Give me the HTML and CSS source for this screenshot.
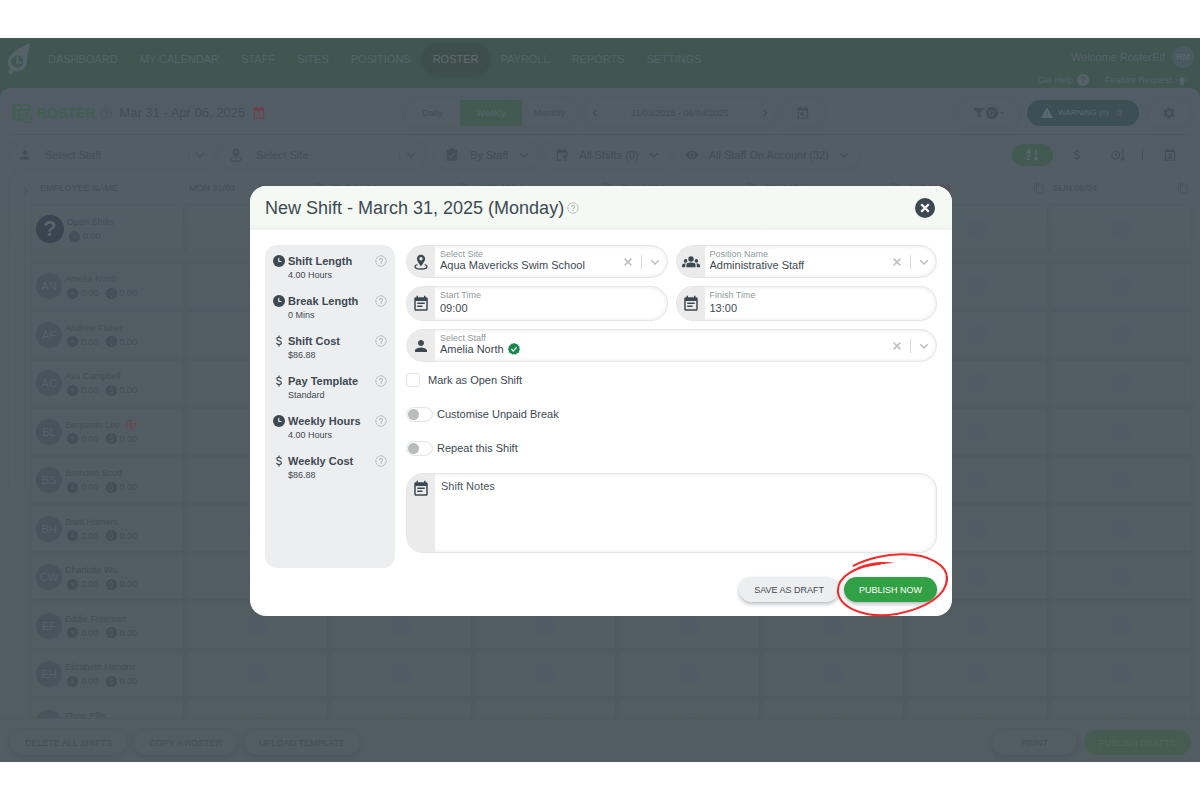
FILE: index.html
```html
<!DOCTYPE html>
<html lang="en">
<head>
  <meta charset="UTF-8">
  <meta name="viewport" content="width=device-width, initial-scale=1.0">
  <title>Roster - New Shift</title>
  <link rel="stylesheet" href="styles.css">
</head>
<body>
  <!-- Icon sprite -->
  <svg class="sprite" aria-hidden="true">
    <symbol id="i-person" viewBox="0 0 24 24"><path d="M12 12c2.21 0 4-1.79 4-4s-1.79-4-4-4-4 1.79-4 4 1.79 4 4 4zm0 2c-2.67 0-8 1.34-8 4v2h16v-2c0-2.66-5.33-4-8-4z"/></symbol>
    <symbol id="i-pin" viewBox="0 0 24 24"><path fill-rule="evenodd" d="M12 1C8.4 1 5.8 3.7 5.8 7.2c0 4.200 6.200 11.300 6.200 11.300s6.200-7.100 6.200-11.300C18.200 3.700 15.600 1 12 1zm0 8.600a2.500 2.500 0 1 1 0-5 2.500 2.500 0 0 1 0 5z"/><path d="M6.500 16C4.300 16.600 3 17.500 3 18.700 3 21 7 22.500 12 22.500s9-1.500 9-3.800c0-1.200-1.300-2.100-3.500-2.700" fill="none" stroke="currentColor" stroke-width="2"/></symbol>
    <symbol id="i-note" viewBox="0 0 24 24"><path d="M17 10H7v2h10v-2zm2-7h-1V1h-2v2H8V1H6v2H5c-1.110 0-1.990.9-1.990 2L3 19c0 1.100.89 2 2 2h14c1.100 0 2-.9 2-2V5c0-1.100-.9-2-2-2zm0 16H5V8h14v11zm-5-5H7v2h7v-2z"/></symbol>
    <symbol id="i-groups" viewBox="0 0 24 24"><path d="M12 12.500c1.800 0 3.400.4 4.500.9 1 .5 1.600 1.500 1.600 2.700V19H5.900v-2.900c0-1.200.6-2.200 1.600-2.700 1.100-.5 2.700-.9 4.500-.9z"/><circle cx="12" cy="8" r="3.600"/><circle cx="4.800" cy="10.500" r="2.400"/><circle cx="19.200" cy="10.500" r="2.400"/><path d="M5 14c-2.500 0-5 .8-5 2.600V19h4.300v-3c0-.8.200-1.400.700-2zM19 14c2.500 0 5 .8 5 2.600V19h-4.300v-3c0-.8-.2-1.400-.7-2z"/></symbol>
    <symbol id="i-help" viewBox="0 0 24 24"><circle cx="12" cy="12" r="10.500" fill="none" stroke="currentColor" stroke-width="1.600"/><path d="M11 18h2v-2h-2v2zM12 6c-2.210 0-4 1.790-4 4h2c0-1.100.9-2 2-2s2 .9 2 2c0 2-3 1.750-3 5h2c0-2.250 3-2.500 3-5 0-2.210-1.790-4-4-4z"/></symbol>
    <symbol id="i-help-fill" viewBox="0 0 24 24"><circle cx="12" cy="12" r="12"/><path class="knock" d="M10.700 19h2.600v-2.600h-2.600V19zM12 4.500c-2.600 0-4.600 2-4.600 4.600H10c0-1.100.9-2 2-2s2 .9 2 2c0 2-3.300 2.200-3.300 5.700h2.600c0-2.400 3.300-2.700 3.300-5.700 0-2.600-2-4.600-4.600-4.600z"/></symbol>
    <symbol id="i-copy" viewBox="0 0 24 24"><path d="M16 1H4c-1.100 0-2 .9-2 2v14h2V3h12V1zm3 4H8c-1.100 0-2 .9-2 2v14c0 1.100.9 2 2 2h11c1.100 0 2-.9 2-2V7c0-1.100-.9-2-2-2zm0 16H8V7h11v14z"/></symbol>
    <symbol id="i-dollar" viewBox="0 0 24 24"><path d="M16.500 7.500C16 5.600 14.300 4.800 12 4.800c-2.700 0-4.400 1.300-4.400 3.300 0 2.300 2 3 4.400 3.600 2.700.7 4.700 1.500 4.700 3.900 0 2.200-1.900 3.600-4.700 3.600-2.600 0-4.500-1.100-4.900-3.300M12 1v4M12 19v4" fill="none" stroke="currentColor" stroke-width="2.400"/></symbol>
    <symbol id="i-clock" viewBox="0 0 24 24"><circle cx="12" cy="12" r="12"/><path class="knock-line" d="M11.500 6v7H17" fill="none" stroke-width="2.200"/></symbol>
    <symbol id="i-coin" viewBox="0 0 24 24"><circle cx="12" cy="12" r="12"/><path class="knock-line" d="M16 8.500c-.6-1.700-2-2.300-4-2.300-2.300 0-3.700 1-3.700 2.600 0 2 1.700 2.500 3.700 3 2.200.6 4 1.200 4 3.200 0 1.700-1.600 2.900-4 2.900-2.200 0-3.800-.9-4.100-2.700M12 3.500V6M12 18v3" fill="none" stroke-width="2"/></symbol>
    <symbol id="i-chevron" viewBox="0 0 24 24"><path d="M3 8l9 9 9-9" fill="none" stroke="currentColor" stroke-width="3.400"/></symbol>
    <symbol id="i-next" viewBox="0 0 24 24"><path d="M8 4l8 8-8 8" fill="none" stroke="currentColor" stroke-width="3"/></symbol>
    <symbol id="i-prev" viewBox="0 0 24 24"><path d="M16 4l-8 8 8 8" fill="none" stroke="currentColor" stroke-width="3"/></symbol>
    <symbol id="i-x" viewBox="0 0 24 24"><path d="M4 4l16 16M20 4L4 20" fill="none" stroke="currentColor" stroke-width="4"/></symbol>
    <symbol id="i-close" viewBox="0 0 24 24"><circle cx="12" cy="12" r="12"/><path d="M7.500 7.500l9 9M16.500 7.500l-9 9" fill="none" stroke="#fff" stroke-width="2.600"/></symbol>
    <symbol id="i-verified" viewBox="0 0 24 24"><path d="M12 0l3 1.600 3.500.2 1.500 3.100 2.900 2L22.700 10.500 24 13l-1.800 3-.6 3.400-3.400.9L15.600 23 12 22.700 8.500 23.200 5.800 20.500l-3.400-.9L1.900 16 0 12.800l1.300-3.200L1.600 6l3.100-1.600L6.300 1.500 9.600 1.700z"/><path d="M6.800 12.300l3.600 3.600 7-7.200" fill="none" stroke="#fff" stroke-width="2.600"/></symbol>
    <symbol id="i-cal-alert" viewBox="0 0 24 24"><path fill-rule="evenodd" d="M19 3h-1V1h-2v2H8V1H6v2H5a2 2 0 0 0-2 2v15a2 2 0 0 0 2 2h14a2 2 0 0 0 2-2V5a2 2 0 0 0-2-2zm0 17H5V8h14v12zM11 9.500h2v5h-2zM11 16h2v2h-2z"/></symbol>
    <symbol id="i-cal" viewBox="0 0 24 24"><path d="M19 3h-1V1h-2v2H8V1H6v2H5a2 2 0 0 0-2 2v15a2 2 0 0 0 2 2h14a2 2 0 0 0 2-2V5a2 2 0 0 0-2-2zm0 17H5V8h14v12zM8 11h5v5H8z"/></symbol>
    <symbol id="i-cal-person" viewBox="0 0 24 24"><path d="M19 3h-1V1h-2v2H8V1H6v2H5a2 2 0 0 0-2 2v15a2 2 0 0 0 2 2h14a2 2 0 0 0 2-2V5a2 2 0 0 0-2-2zm0 17H5V7h14v13z"/><circle cx="12" cy="11.500" r="2.300"/><path d="M7.500 18v-1c0-1.500 3-2.300 4.500-2.300s4.500.8 4.500 2.300v1z"/></symbol>
    <symbol id="i-cal-filter" viewBox="0 0 24 24"><path d="M19 3h-1V1h-2v2H8V1H6v2H5a2 2 0 0 0-2 2v15a2 2 0 0 0 2 2h7v-2H5V8h14v3h2V5a2 2 0 0 0-2-2z"/><path d="M12.500 13H23l-4 4.500V23l-2.500-1.500v-4z"/></symbol>
    <symbol id="i-task" viewBox="0 0 24 24"><path d="M19 3h-4a3 3 0 0 0-6 0H5a2 2 0 0 0-2 2v15a2 2 0 0 0 2 2h14a2 2 0 0 0 2-2V5a2 2 0 0 0-2-2z"/><path class="knock-line" d="M7 12.500l3.500 3.500L17 9.500" fill="none" stroke-width="2.200"/></symbol>
    <symbol id="i-eye" viewBox="0 0 24 24"><path d="M12 4.500C7 4.500 2.730 7.610 1 12c1.730 4.390 6 7.500 11 7.500s9.270-3.110 11-7.500c-1.730-4.390-6-7.500-11-7.500zM12 17c-2.760 0-5-2.240-5-5s2.240-5 5-5 5 2.240 5 5-2.240 5-5 5zm0-8c-1.660 0-3 1.340-3 3s1.340 3 3 3 3-1.340 3-3-1.340-3-3-3z"/></symbol>
    <symbol id="i-filter" viewBox="0 0 24 24"><path d="M1 2h22l-8 10v10l-6-4v-6z"/></symbol>
    <symbol id="i-warning" viewBox="0 0 24 24"><path d="M0 22h24L12 1 0 22zm13-3h-2v-2h2v2zm0-4h-2V9h2v6z"/></symbol>
    <symbol id="i-gear" viewBox="0 0 24 24"><path d="M19.140 12.940c.04-.3.06-.61.06-.94 0-.32-.02-.64-.07-.94l2.030-1.580c.18-.14.23-.41.12-.61l-1.920-3.320c-.12-.22-.37-.29-.59-.22l-2.390.96c-.5-.38-1.030-.7-1.620-.94l-.36-2.540c-.04-.24-.24-.41-.48-.41h-3.840c-.24 0-.43.17-.47.41l-.36 2.540c-.59.24-1.130.57-1.620.94l-2.390-.96c-.22-.08-.47 0-.59.22L2.740 8.870c-.12.21-.08.47.12.61l2.030 1.580c-.05.3-.09.63-.09.94s.02.64.07.94l-2.030 1.580c-.18.14-.23.41-.12.61l1.920 3.320c.12.22.37.29.59.22l2.390-.96c.5.38 1.030.7 1.620.94l.36 2.540c.05.24.24.41.48.41h3.840c.24 0 .44-.17.47-.41l.36-2.540c.59-.24 1.130-.56 1.620-.94l2.390.96c.22.08.47 0 .59-.22l1.920-3.320c.12-.22.07-.47-.12-.61l-2.010-1.580zM12 15.600c-1.980 0-3.600-1.620-3.600-3.600s1.620-3.600 3.600-3.600 3.600 1.620 3.600 3.600-1.620 3.600-3.600 3.600z"/></symbol>
    <symbol id="i-sort-time" viewBox="0 0 24 24"><circle cx="8" cy="12" r="6.500" fill="none" stroke="currentColor" stroke-width="2"/><path d="M8 8v4l2.500 2M20 2v18M16.500 17l3.500 4 3.500-4" fill="none" stroke="currentColor" stroke-width="2"/></symbol>
    <symbol id="i-down" viewBox="0 0 12 24"><path d="M6 1v20M2 17l4 5 4-5" fill="none" stroke="currentColor" stroke-width="2.400"/></symbol>
    <symbol id="i-bulb" viewBox="0 0 24 24"><path d="M12 6a6 6 0 0 0-3 11v5h6v-5a6 6 0 0 0-3-11z"/><path d="M12 0v3M3 4l2 2M21 4l-2 2M0 12h3M21 12h3" stroke="currentColor" stroke-width="2"/></symbol>
    <symbol id="i-pay" viewBox="0 0 24 24"><path d="M4 16A9 9 0 0 1 14 3M20 8a9 9 0 0 1-10 13M1 10l3 6 4-4M23 14l-3-6-4 4" fill="none" stroke="currentColor" stroke-width="2"/><path d="M15 9c-3-3-7 0-4.500 2.500C12 12.500 15 12.500 14.500 15c-1 2-4 2-5.500 0M12 6v12" fill="none" stroke="currentColor" stroke-width="1.800"/></symbol>
    <symbol id="i-add" viewBox="0 0 24 24"><circle cx="12" cy="12" r="11"/><path class="knock-line" d="M12 6v12M6 12h12" stroke-width="1.600"/></symbol>
  </svg>

  <div class="app">
    <header class="topbar">
      <svg class="logo" viewBox="22 22 68 94" aria-label="RosterElf"><path fill-rule="evenodd" d="M88 22C60 34 24 52 24 80c0 8 3 14 7 18l-8 10 10 7 7-11c22 6 40-8 40-30 0-20 6-34 8-52zM51 59a18 18 0 1 0 0 36 18 18 0 0 0 0-36z"/><path d="M51 62v18h14" fill="none" stroke="currentColor" stroke-width="6"/></svg>
      <nav class="nav">
        <a href="#">DASHBOARD</a>
        <a href="#">MY CALENDAR</a>
        <a href="#">STAFF</a>
        <a href="#">SITES</a>
        <a href="#">POSITIONS</a>
        <a href="#" class="active">ROSTER</a>
        <a href="#">PAYROLL</a>
        <a href="#">REPORTS</a>
        <a href="#">SETTINGS</a>
      </nav>
      <div class="account">
        <div class="welcome">Welcome RosterElf <span class="user">RM</span></div>
        <div class="help-links">
          <a href="#">Get Help <svg class="icon s12"><use href="#i-help-fill"/></svg></a>
          <a href="#">Feature Request <svg class="icon s12"><use href="#i-bulb"/></svg></a>
        </div>
      </div>
    </header>

    <main class="content">
      <div class="title-row">
        <div class="title-left">
          <svg class="roster-icon" viewBox="0 0 24 24"><path d="M11 20H2V2h19v8M2 8h19M2 14h9M11 2v6M8 8v12" fill="none" stroke="currentColor" stroke-width="2.400"/><circle cx="17.500" cy="17.500" r="5.500" fill="none" stroke="currentColor" stroke-width="2"/><path d="M17 14.500V18h3" fill="none" stroke="currentColor" stroke-width="1.600"/></svg>
          <h1>ROSTER</h1>
          <svg class="icon s12 faint"><use href="#i-help"/></svg>
          <span class="period">Mar 31 - Apr 06, 2025</span>
          <svg class="icon s14 red"><use href="#i-cal-alert"/></svg>
        </div>
        <div class="pill views">
          <button>Daily</button>
          <button class="selected">Weekly</button>
          <button>Monthly</button>
        </div>
        <div class="pill range">
          <button aria-label="Previous week"><svg class="icon s10"><use href="#i-prev"/></svg></button>
          <span>31/03/2025 - 06/04/2025</span>
          <button aria-label="Next week"><svg class="icon s10"><use href="#i-next"/></svg></button>
        </div>
        <button class="pill square" aria-label="Today"><svg class="icon s14"><use href="#i-cal"/></svg></button>
        <div class="actions">
          <button class="pill filter" aria-label="Filter"><svg class="icon s12"><use href="#i-filter"/></svg><span class="count">0</span><span class="caret"></span></button>
          <button class="warning"><svg class="icon s12"><use href="#i-warning"/></svg>WARNING (0)<span class="dot">0</span></button>
          <button class="pill square" aria-label="Settings"><svg class="icon s14"><use href="#i-gear"/></svg></button>
        </div>
      </div>

      <div class="filters">
        <button class="pill combo wide"><svg class="icon s14"><use href="#i-person"/></svg><span>Select Staff</span><svg class="icon s10 split"><use href="#i-chevron"/></svg></button>
        <button class="pill combo wide"><svg class="icon s14"><use href="#i-pin"/></svg><span>Select Site</span><svg class="icon s10 split"><use href="#i-chevron"/></svg></button>
        <button class="pill combo first"><svg class="icon s14"><use href="#i-task"/></svg><span>By Staff</span><svg class="icon s10"><use href="#i-chevron"/></svg></button>
        <button class="pill combo"><svg class="icon s14"><use href="#i-cal-filter"/></svg><span>All Shifts (0)</span><svg class="icon s10"><use href="#i-chevron"/></svg></button>
        <button class="pill combo"><svg class="icon s14"><use href="#i-eye"/></svg><span>All Staff On Account (32)</span><svg class="icon s10"><use href="#i-chevron"/></svg></button>
        <div class="sorting">
          <button class="sort on" aria-label="Sort by name"><span class="az">A<br>Z</span><svg class="icon down"><use href="#i-down"/></svg></button>
          <button class="sort" aria-label="Sort by cost"><svg class="icon s12"><use href="#i-dollar"/></svg></button>
          <button class="sort" aria-label="Sort by hours"><svg class="icon s14"><use href="#i-sort-time"/></svg></button>
          <span class="bar"></span>
          <button class="sort leave" aria-label="Leave calendar"><svg class="icon s14"><use href="#i-cal-person"/></svg></button>
        </div>
      </div>

      <div class="roster">
        <div class="strip"><button class="expand" aria-label="Expand"><svg class="icon s10"><use href="#i-next"/></svg></button></div>
        <div class="table-wrap">
          <table>
            <thead><tr id="days"><th class="employee">EMPLOYEE NAME</th></tr></thead>
            <tbody id="open"></tbody>
            <tbody><tr class="spacer"><td colspan="8"></td></tr></tbody>
            <tbody id="staff"></tbody>
          </table>
        </div>
      </div>

      <footer class="bottombar">
        <button class="foot">DELETE ALL SHIFTS</button>
        <button class="foot">COPY A ROSTER</button>
        <button class="foot">UPLOAD TEMPLATE</button>
        <button class="foot print">PRINT</button>
        <button class="foot publish-drafts">PUBLISH DRAFTS</button>
      </footer>
    </main>

    <div class="overlay">
      <form class="modal" role="dialog" aria-labelledby="modal-title">
        <div class="modal-header">
          <h2 id="modal-title">New Shift - March 31, 2025 (Monday)</h2>
          <svg class="icon s12 hint"><use href="#i-help"/></svg>
          <button type="button" class="close" aria-label="Close"><svg class="icon s20"><use href="#i-close"/></svg></button>
        </div>

        <div class="modal-body">
          <aside class="summary">
            <div class="stat"><svg class="icon s12"><use href="#i-clock"/></svg><strong>Shift Length</strong><svg class="icon s12 hint"><use href="#i-help"/></svg><span>4.00 Hours</span></div>
            <div class="stat"><svg class="icon s12"><use href="#i-clock"/></svg><strong>Break Length</strong><svg class="icon s12 hint"><use href="#i-help"/></svg><span>0 Mins</span></div>
            <div class="stat"><svg class="icon s12"><use href="#i-dollar"/></svg><strong>Shift Cost</strong><svg class="icon s12 hint"><use href="#i-help"/></svg><span>$86.88</span></div>
            <div class="stat"><svg class="icon s12"><use href="#i-dollar"/></svg><strong>Pay Template</strong><svg class="icon s12 hint"><use href="#i-help"/></svg><span>Standard</span></div>
            <div class="stat"><svg class="icon s12"><use href="#i-clock"/></svg><strong>Weekly Hours</strong><svg class="icon s12 hint"><use href="#i-help"/></svg><span>4.00 Hours</span></div>
            <div class="stat"><svg class="icon s12"><use href="#i-dollar"/></svg><strong>Weekly Cost</strong><svg class="icon s12 hint"><use href="#i-help"/></svg><span>$86.88</span></div>
          </aside>

          <div class="fields">
            <div class="field">
              <span class="field-icon"><svg class="icon s16"><use href="#i-pin"/></svg></span>
              <div class="control">
                <label for="site">Select Site</label>
                <select id="site"><option>Aqua Mavericks Swim School</option></select>
              </div>
              <button type="button" class="clear" aria-label="Clear site"><svg class="icon s10"><use href="#i-x"/></svg></button>
              <svg class="icon arrow"><use href="#i-chevron"/></svg>
            </div>
            <div class="field">
              <span class="field-icon"><svg class="icon s18"><use href="#i-groups"/></svg></span>
              <div class="control">
                <label for="position">Position Name</label>
                <select id="position"><option>Administrative Staff</option></select>
              </div>
              <button type="button" class="clear" aria-label="Clear position"><svg class="icon s10"><use href="#i-x"/></svg></button>
              <svg class="icon arrow"><use href="#i-chevron"/></svg>
            </div>
            <div class="field time">
              <span class="field-icon"><svg class="icon s18"><use href="#i-note"/></svg></span>
              <div class="control">
                <label for="start">Start Time</label>
                <input id="start" type="text" value="09:00">
              </div>
            </div>
            <div class="field time">
              <span class="field-icon"><svg class="icon s18"><use href="#i-note"/></svg></span>
              <div class="control">
                <label for="finish">Finish Time</label>
                <input id="finish" type="text" value="13:00">
              </div>
            </div>
            <div class="field full">
              <span class="field-icon"><svg class="icon s18"><use href="#i-person"/></svg></span>
              <div class="control">
                <label for="member">Select Staff</label>
                <div class="with-badge">
                  <select id="member"><option>Amelia North</option></select>
                  <svg class="icon s12 verified"><use href="#i-verified"/></svg>
                </div>
              </div>
              <button type="button" class="clear" aria-label="Clear staff"><svg class="icon s10"><use href="#i-x"/></svg></button>
              <svg class="icon arrow"><use href="#i-chevron"/></svg>
            </div>

            <div class="options full">
              <label class="check"><input type="checkbox">Mark as Open Shift</label>
              <label class="switch"><input type="checkbox" role="switch">Customise Unpaid Break</label>
              <label class="switch"><input type="checkbox" role="switch">Repeat this Shift</label>
            </div>

            <div class="field notes full">
              <span class="field-icon"><svg class="icon s18"><use href="#i-note"/></svg></span>
              <textarea aria-label="Shift Notes" placeholder="Shift Notes"></textarea>
            </div>
          </div>
        </div>

        <div class="modal-footer">
          <button type="button" class="btn">SAVE AS DRAFT</button>
          <div class="marked">
            <button type="submit" class="btn primary">PUBLISH NOW</button>
            <svg class="scribble" viewBox="408 274 342 204"><path d="M461 318C500 297 560 283 610 284 690 284 742 318 741 357 740 405 680 446 590 463 510 477 425 452 414 400 408 350 470 318 540 312" fill="none" stroke="#f52a2a" stroke-width="6" stroke-linecap="round"/><path d="M470 325C500 309 545 304 584 309 550 312 500 318 470 330zM737 350C744 400 690 440 590 461 650 453 748 410 744 350z" fill="#f52a2a"/></svg>
          </div>
        </div>
      </form>
    </div>
  </div>

  <script src="script.js"></script>
</body>
</html>
```

FILE: styles.css
```css
* {
  box-sizing: border-box;
}

body {
  margin: 0;
  background: #fff;
  font-family: "Liberation Sans", Arial, sans-serif;
  font-size: 11px;
  color: #3d4952;
}

button,
input,
select,
textarea {
  font: inherit;
  color: inherit;
  margin: 0;
  padding: 0;
  border: 0;
  background: none;
}

button {
  display: flex;
  align-items: center;
  justify-content: center;
}

a {
  color: inherit;
  text-decoration: none;
}

/* Icons */
.sprite {
  position: absolute;
  width: 0;
  height: 0;
}

.icon {
  flex: none;
  fill: currentColor;
  --knock: #525d63;
}

.knock {
  fill: var(--knock);
}

.knock-line {
  stroke: var(--knock);
}

.s10 { width: 10px; height: 10px; }
.s12 { width: 12px; height: 12px; }
.s14 { width: 14px; height: 14px; }
.s16 { width: 16px; height: 16px; }
.s18 { width: 18px; height: 18px; }
.s20 { width: 20px; height: 20px; }

/* Dimmed page behind the dialog */
.app {
  position: relative;
  display: flex;
  flex-direction: column;
  height: calc(100vh - 76px);
  margin: 38px 0;
  background: #415650;
  color: #434e56;
  overflow: hidden;
}

.topbar {
  display: flex;
  height: 50px;
  padding: 0 6px 0 7px;
  color: #56626a;
}

.logo {
  width: 24px;
  height: 32px;
  margin-top: 5px;
  fill: currentColor;
}

.nav {
  display: flex;
  align-items: center;
  height: 33px;
  margin: 5px 0 0 6px;
}

.nav a {
  padding: 10px 11px;
  line-height: 13px;
}

.nav .active {
  border-radius: 17px;
  background: #3e4e4c;
  box-shadow: 0 1px 4px #3d504c;
  color: #626c76;
}

.account {
  margin-left: auto;
  padding-top: 8px;
}

.welcome,
.help-links,
.help-links a {
  display: flex;
  align-items: center;
  justify-content: flex-end;
}

.welcome {
  gap: 7px;
}

.user {
  display: grid;
  place-items: center;
  width: 22px;
  height: 22px;
  border-radius: 50%;
  background: #4b5960;
  font-size: 9px;
  color: #5f6a74;
}

.help-links {
  gap: 16px;
  height: 20px;
  padding-top: 4px;
  padding-right: 6px;
  font-size: 9px;
}

.help-links a {
  gap: 4px;
}

.help-links .icon {
  --knock: #415650;
}

.content {
  display: flex;
  flex: 1;
  flex-direction: column;
  min-height: 0;
  border-radius: 10px 10px 0 0;
  background: linear-gradient(#525c66, #525d63 160px, #515d61);
}

.title-row {
  display: flex;
  align-items: center;
  gap: 9px;
  height: 47px;
  margin: 0 10px;
  padding-top: 3px;
  border-bottom: 1px solid #4c575e;
  font-size: 9px;
}

.title-left {
  display: flex;
  flex: 0 0 386px;
  align-items: center;
  gap: 7px;
  padding-left: 2px;
}

.roster-icon {
  width: 20px;
  height: 20px;
  color: #435f52;
}

.title-left h1 {
  margin: 0 -2px;
  font-size: 14px;
  color: #435f52;
}

.period {
  font-size: 13px;
}

.faint {
  color: #49545b;
}

.red {
  color: #713f4a;
}

.pill {
  border-radius: 13px;
  height: 26px;
  box-shadow: 0 0 4px #4f5a64;
}

.views {
  display: flex;
  width: 172px;
}

.views button {
  flex: 1 1 0;
}

.views .selected {
  flex: 0 0 62px;
  background: #425a51;
  color: #56676c;
}

.range {
  display: flex;
  align-items: center;
  justify-content: space-between;
  width: 187px;
}

.range button {
  width: 17px;
  height: 26px;
}

.square {
  width: 42px;
}

.actions {
  display: flex;
  align-items: center;
  gap: 9px;
  margin-left: auto;
}

.filter {
  width: 60px;
  gap: 1px;
}

.count {
  width: 12px;
  border-radius: 6px;
  background: #414c53;
  color: #566168;
  font-size: 9px;
  line-height: 12px;
}

.caret {
  border: 2px solid transparent;
  border-top-color: currentColor;
  margin: 2px 0 0 1px;
}

.warning {
  gap: 5px;
  width: 112px;
  height: 26px;
  border-radius: 13px;
  background: #3c5054;
  color: #596a70;
  font-size: 8px;
}

.dot {
  width: 11px;
  border-radius: 6px;
  background: #424f56;
  line-height: 11px;
}

.filters {
  display: flex;
  align-items: center;
  gap: 8px;
  height: 35px;
  padding: 4px 10px 0;
}

.combo {
  gap: 10px;
  padding: 0 9px;
}

.combo.wide {
  width: 203px;
  gap: 13px;
  padding: 0 8px;
  color: #454f57;
}

.combo.wide span {
  flex: 1;
  text-align: left;
}

.combo.first {
  gap: 11px;
  margin-left: 4px;
}

.split {
  width: 17px;
  padding-left: 6px;
  border-left: 1px solid #4c575e;
  color: #48535b;
}

.sorting {
  display: flex;
  align-items: center;
  gap: 7px;
  margin-left: auto;
}

.sort {
  width: 34px;
  height: 22px;
  border-radius: 11px;
}

.sort.on {
  width: 41px;
  gap: 2px;
  background: #425a51;
  color: #5b6c70;
}

.sort.leave {
  width: 40px;
}

.az {
  font-size: 7px;
  font-weight: bold;
  line-height: 6px;
}

.down {
  width: 6px;
  height: 12px;
}

.bar {
  width: 1px;
  height: 11px;
  background: #434e56;
}

/* Roster table */
.roster {
  display: flex;
  flex: 1;
  min-height: 0;
  overflow: hidden;
  padding: 0 5px 0 8px;
}

.strip {
  position: relative;
  width: 17px;
  height: 320px;
  margin: 4px 3px 0 0;
  border: 1px solid #4f5a61;
  border-radius: 8px;
}

.expand {
  position: absolute;
  top: 8px;
  right: -10px;
  width: 16px;
  height: 16px;
}

.expand .icon {
  width: 8px;
  height: 8px;
}

.table-wrap {
  flex: 1;
}

.roster table {
  width: 100%;
  table-layout: fixed;
  border-collapse: separate;
  border-spacing: 4px;
  font-size: 9px;
}

.roster th {
  height: 28px;
  padding: 0 2px;
  font-weight: normal;
  text-align: left;
}

.roster th.employee {
  width: 151px;
  padding-left: 8px;
}

.roster .sat {
  color: #633f4a;
}

.day {
  display: flex;
  align-items: center;
  justify-content: space-between;
}

.roster td {
  height: 44px;
  padding: 0 4px;
  box-shadow: 0 0 2px 1px #4f5a60;
}

#open td {
  height: 46px;
}

#staff tr:nth-child(even) td {
  height: 45px;
}

.roster .spacer td {
  height: 4px;
  padding: 0;
  box-shadow: none;
}

.person {
  display: flex;
  align-items: center;
  gap: 3px;
}

.avatar {
  display: grid;
  flex: none;
  place-items: center;
  width: 26px;
  height: 26px;
  border-radius: 50%;
  background: #48545b;
  color: #566269;
  font-size: 11px;
}

.avatar.unknown {
  width: 28px;
  height: 28px;
  background: #394550;
  color: #5a656d;
  font-size: 22px;
  font-weight: bold;
}

.name,
.totals {
  display: flex;
  align-items: center;
  gap: 3px;
  height: 14px;
  white-space: nowrap;
}

.name {
  gap: 5px;
}

.totals {
  padding-left: 2px;
}

.totals .icon {
  width: 11px;
  height: 11px;
}

.totals .icon + span + .icon {
  margin-left: 4px;
}

.add {
  width: 22px;
  height: 22px;
  margin: auto;
  color: #505b65;
}

.add .icon {
  width: 22px;
  height: 22px;
}

.bottombar {
  display: flex;
  align-items: center;
  gap: 7px;
  height: 44px;
  padding: 4px 9px 0 10px;
  border-top: 1px solid #4e595f;
}

.foot {
  height: 25px;
  padding: 0 15px;
  border-radius: 13px;
  box-shadow: 0 1px 4px #4a555c;
  font-size: 9px;
}

.foot.print {
  margin-left: auto;
  padding: 0 29px;
}

.foot.publish-drafts {
  background: #465b52;
  box-shadow: none;
  color: #536460;
}

/* Dialog */
.overlay {
  position: absolute;
  inset: 0;
  display: flex;
  align-items: center;
  justify-content: center;
  padding: 2px 0 0 2px;
}

.modal {
  width: 702px;
  max-width: 100%;
  border-radius: 16px;
  background: #fff;
  color: #3d4952;
}

.modal-header {
  display: flex;
  align-items: center;
  gap: 3px;
  height: 44px;
  padding: 0 17px 0 15px;
  border-radius: 16px 16px 0 0;
  background: linear-gradient(#f4f9f4 85%, #edf4ec);
}

.modal-header h2 {
  margin: 0;
  font-size: 18px;
  font-weight: normal;
}

.hint {
  color: #aeb4b7;
}

.close {
  margin-left: auto;
}

.modal-body {
  display: flex;
  gap: 11px;
  padding: 15px 15px 0;
}

.summary {
  flex: 0 0 130px;
  min-height: 323px;
  padding: 9px 8px;
  border-radius: 12px;
  background: #edeef0;
}

.stat {
  display: grid;
  grid-template-columns: 12px 1fr 12px;
  align-items: center;
  gap: 1px 3px;
  margin-bottom: 13px;
}

.stat .icon {
  --knock: #edeef0;
}

.stat strong {
  line-height: 14px;
}

.stat span {
  grid-column: 2;
  font-size: 9px;
  line-height: 12px;
}

.fields {
  display: grid;
  flex: 1;
  grid-template-columns: 1fr 1fr;
  align-content: start;
  gap: 8px;
}

.full {
  grid-column: 1 / -1;
}

.field {
  display: flex;
  align-items: center;
  height: 33px;
  border: 1px solid #e4e5e5;
  border-radius: 17px;
  box-shadow: inset 0 0 4px #e6e6e6;
  overflow: hidden;
}

.field.time {
  height: 35px;
}

.field-icon {
  display: flex;
  flex: 0 0 28px;
  align-self: stretch;
  align-items: center;
  justify-content: center;
  background: #ebebeb;
}

.control {
  display: flex;
  flex: 1;
  flex-direction: column;
  align-items: flex-start;
  align-self: stretch;
  padding: 3px 0 0 5px;
}

.control label {
  font-size: 9px;
  line-height: 10px;
  color: #919a9c;
}

.control select,
.control input {
  appearance: none;
  height: 12px;
  line-height: 12px;
  outline: 0;
}

.control input {
  width: 100%;
  margin-top: 2px;
}

.with-badge {
  display: flex;
  align-items: center;
  gap: 4px;
}

.verified {
  color: #15884e;
}

.clear {
  padding-right: 8px;
  color: #bfc2c4;
}

.arrow {
  width: 26px;
  height: 14px;
  padding: 2px 7px 2px 8px;
  border-left: 1px solid #d5d7d8;
  color: #b9bdbf;
}

.options {
  display: flex;
  flex-direction: column;
  gap: 14px;
  padding-bottom: 7px;
}

.options label {
  display: flex;
  align-items: center;
  height: 20px;
}

.check input {
  appearance: none;
  width: 14px;
  height: 14px;
  margin-right: 8px;
  border: 1px solid #e2e4e4;
  border-radius: 2px;
}

.switch input {
  appearance: none;
  width: 27px;
  height: 15px;
  margin-right: 4px;
  padding: 1px;
  border: 1px solid #e4e5e5;
  border-radius: 8px;
  box-shadow: inset 0 0 2px #e6e6e6;
}

.switch input::before {
  content: "";
  display: block;
  width: 11px;
  height: 11px;
  border-radius: 50%;
  background: #b9bcbc;
}

.field.notes {
  align-items: stretch;
  height: 80px;
}

.notes .field-icon {
  align-items: flex-start;
  padding-top: 6px;
}

.notes textarea {
  flex: 1;
  padding: 6px;
  outline: 0;
  resize: none;
}

.notes textarea::placeholder {
  color: #4b565e;
}

.modal-footer {
  display: flex;
  justify-content: flex-end;
  gap: 5px;
  padding: 9px 15px 14px;
}

.btn {
  height: 25px;
  padding: 0 15px;
  border-radius: 13px;
  background: #edeef0;
  box-shadow: 0 2px 4px #b5b9bb;
  font-size: 9px;
}

.btn.primary {
  background: #32a045;
  color: #fff;
}

.marked {
  position: relative;
}

/* Hand-drawn ring round the publish button */
.scribble {
  position: absolute;
  top: -26px;
  left: -8px;
  width: 114px;
  height: 68px;
  pointer-events: none;
}
```

FILE: script.js
```js
const days = ['MON 31/03', 'TUE 01/04', 'WED 02/04', 'THU 03/04', 'FRI 04/04', 'SAT 05/04', 'SUN 06/04'];
const staff = [
  'Amelia North', 'Andrew Fisher', 'Ava Campbell', 'Benjamin Lee', 'Brendan Scott',
  'Brett Homers', 'Charlotte Wu', 'Eddie Freeman', 'Elizabeth Hendrix', 'Flynn Ellis'
];

function icon(name, size) {
  return `<svg class="icon ${size}"><use href="#i-${name}"/></svg>`;
}

// One empty cell per day, each with its add button
function dayCells() {
  return days.map(day => `<td><button class="add" aria-label="Add shift ${day}">${icon('add', '')}</button></td>`).join('');
}

function initials(name) {
  return name.split(' ').map(part => part[0]).join('');
}

document.getElementById('days').innerHTML += days.map(day =>
  `<th class="${day.startsWith('SAT') ? 'sat' : ''}"><div class="day">${day}${icon('copy', 's12 faint')}</div></th>`
).join('');

document.getElementById('open').innerHTML = `<tr><td><div class="person">
  <span class="avatar unknown">?</span>
  <div><div class="name">Open Shifts</div><div class="totals">${icon('clock', '')}<span>0.00</span></div></div>
</div></td>${dayCells()}</tr>`;

document.getElementById('staff').innerHTML = staff.map(name => `<tr><td><div class="person">
  <span class="avatar">${initials(name)}</span>
  <div>
    <div class="name">${name}${name === 'Benjamin Lee' ? icon('pay', 's12 red') : ''}</div>
    <div class="totals">${icon('clock', '')}<span>0.00</span>${icon('coin', '')}<span>0.00</span></div>
  </div>
</div></td>${dayCells()}</tr>`).join('');
```
